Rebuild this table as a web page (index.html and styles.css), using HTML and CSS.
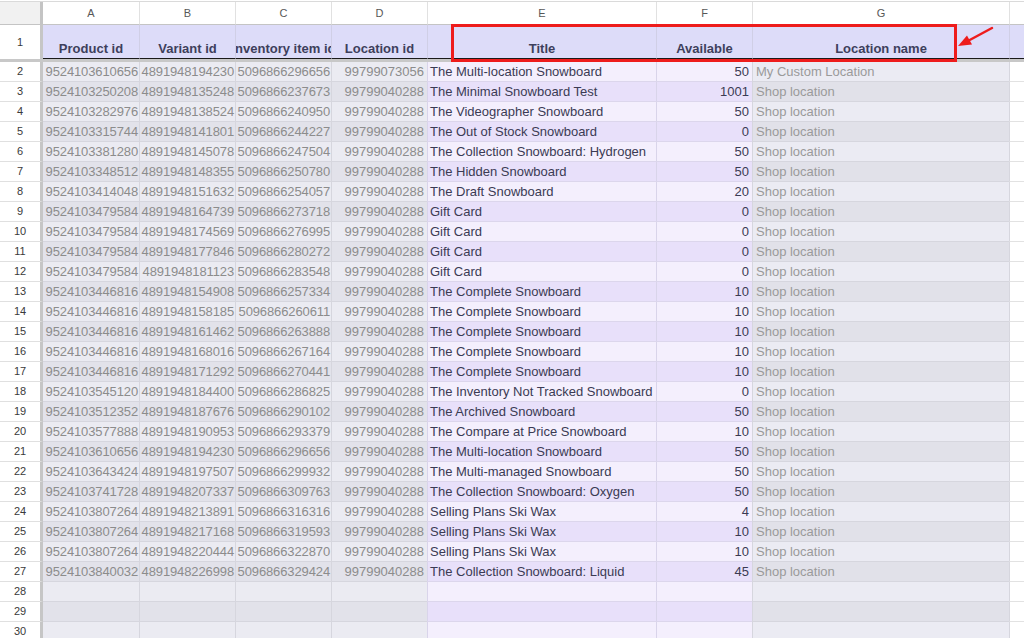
FILE: index.html
```html
<!DOCTYPE html>
<html>
<head>
<meta charset="utf-8">
<link rel="stylesheet" href="styles.css">
</head>
<body>
<div class="sheet">
  <div class="row colhead">
    <div class="corner"></div>
    <div class="ch">A</div><div class="ch">B</div><div class="ch">C</div><div class="ch">D</div><div class="ch">E</div><div class="ch">F</div><div class="ch">G</div><div class="ch"></div>
  </div>
  <div class="row r1">
    <div class="h">1</div>
    <div class="t">Product id</div>
    <div class="t">Variant id</div>
    <div class="t">Inventory item id</div>
    <div class="t">Location id</div>
    <div class="t">Title</div>
    <div class="t">Available</div>
    <div class="t">Location name</div>
    <div class="t blank"></div>
  </div>
  <div class="freeze"></div>

  <div class="row lt"><div class="h">2</div><div class="c n">9524103610656</div><div class="c n">4891948194230</div><div class="c n">5096866296656</div><div class="c n">99799073056</div><div class="c e">The Multi-location Snowboard</div><div class="c e n">50</div><div class="c g">My Custom Location</div><div class="c x"></div></div>
  <div class="row dk"><div class="h">3</div><div class="c n">9524103250208</div><div class="c n">4891948135248</div><div class="c n">5096866237673</div><div class="c n">99799040288</div><div class="c e">The Minimal Snowboard Test</div><div class="c e n">1001</div><div class="c g">Shop location</div><div class="c x"></div></div>
  <div class="row lt"><div class="h">4</div><div class="c n">9524103282976</div><div class="c n">4891948138524</div><div class="c n">5096866240950</div><div class="c n">99799040288</div><div class="c e">The Videographer Snowboard</div><div class="c e n">50</div><div class="c g">Shop location</div><div class="c x"></div></div>
  <div class="row dk"><div class="h">5</div><div class="c n">9524103315744</div><div class="c n">4891948141801</div><div class="c n">5096866244227</div><div class="c n">99799040288</div><div class="c e">The Out of Stock Snowboard</div><div class="c e n">0</div><div class="c g">Shop location</div><div class="c x"></div></div>
  <div class="row lt"><div class="h">6</div><div class="c n">9524103381280</div><div class="c n">4891948145078</div><div class="c n">5096866247504</div><div class="c n">99799040288</div><div class="c e">The Collection Snowboard: Hydrogen</div><div class="c e n">50</div><div class="c g">Shop location</div><div class="c x"></div></div>
  <div class="row dk"><div class="h">7</div><div class="c n">9524103348512</div><div class="c n">4891948148355</div><div class="c n">5096866250780</div><div class="c n">99799040288</div><div class="c e">The Hidden Snowboard</div><div class="c e n">50</div><div class="c g">Shop location</div><div class="c x"></div></div>
  <div class="row lt"><div class="h">8</div><div class="c n">9524103414048</div><div class="c n">4891948151632</div><div class="c n">5096866254057</div><div class="c n">99799040288</div><div class="c e">The Draft Snowboard</div><div class="c e n">20</div><div class="c g">Shop location</div><div class="c x"></div></div>
  <div class="row dk"><div class="h">9</div><div class="c n">9524103479584</div><div class="c n">4891948164739</div><div class="c n">5096866273718</div><div class="c n">99799040288</div><div class="c e">Gift Card</div><div class="c e n">0</div><div class="c g">Shop location</div><div class="c x"></div></div>
  <div class="row lt"><div class="h">10</div><div class="c n">9524103479584</div><div class="c n">4891948174569</div><div class="c n">5096866276995</div><div class="c n">99799040288</div><div class="c e">Gift Card</div><div class="c e n">0</div><div class="c g">Shop location</div><div class="c x"></div></div>
  <div class="row dk"><div class="h">11</div><div class="c n">9524103479584</div><div class="c n">4891948177846</div><div class="c n">5096866280272</div><div class="c n">99799040288</div><div class="c e">Gift Card</div><div class="c e n">0</div><div class="c g">Shop location</div><div class="c x"></div></div>
  <div class="row lt"><div class="h">12</div><div class="c n">9524103479584</div><div class="c n">4891948181123</div><div class="c n">5096866283548</div><div class="c n">99799040288</div><div class="c e">Gift Card</div><div class="c e n">0</div><div class="c g">Shop location</div><div class="c x"></div></div>
  <div class="row dk"><div class="h">13</div><div class="c n">9524103446816</div><div class="c n">4891948154908</div><div class="c n">5096866257334</div><div class="c n">99799040288</div><div class="c e">The Complete Snowboard</div><div class="c e n">10</div><div class="c g">Shop location</div><div class="c x"></div></div>
  <div class="row lt"><div class="h">14</div><div class="c n">9524103446816</div><div class="c n">4891948158185</div><div class="c n">5096866260611</div><div class="c n">99799040288</div><div class="c e">The Complete Snowboard</div><div class="c e n">10</div><div class="c g">Shop location</div><div class="c x"></div></div>
  <div class="row dk"><div class="h">15</div><div class="c n">9524103446816</div><div class="c n">4891948161462</div><div class="c n">5096866263888</div><div class="c n">99799040288</div><div class="c e">The Complete Snowboard</div><div class="c e n">10</div><div class="c g">Shop location</div><div class="c x"></div></div>
  <div class="row lt"><div class="h">16</div><div class="c n">9524103446816</div><div class="c n">4891948168016</div><div class="c n">5096866267164</div><div class="c n">99799040288</div><div class="c e">The Complete Snowboard</div><div class="c e n">10</div><div class="c g">Shop location</div><div class="c x"></div></div>
  <div class="row dk"><div class="h">17</div><div class="c n">9524103446816</div><div class="c n">4891948171292</div><div class="c n">5096866270441</div><div class="c n">99799040288</div><div class="c e">The Complete Snowboard</div><div class="c e n">10</div><div class="c g">Shop location</div><div class="c x"></div></div>
  <div class="row lt"><div class="h">18</div><div class="c n">9524103545120</div><div class="c n">4891948184400</div><div class="c n">5096866286825</div><div class="c n">99799040288</div><div class="c e">The Inventory Not Tracked Snowboard</div><div class="c e n">0</div><div class="c g">Shop location</div><div class="c x"></div></div>
  <div class="row dk"><div class="h">19</div><div class="c n">9524103512352</div><div class="c n">4891948187676</div><div class="c n">5096866290102</div><div class="c n">99799040288</div><div class="c e">The Archived Snowboard</div><div class="c e n">50</div><div class="c g">Shop location</div><div class="c x"></div></div>
  <div class="row lt"><div class="h">20</div><div class="c n">9524103577888</div><div class="c n">4891948190953</div><div class="c n">5096866293379</div><div class="c n">99799040288</div><div class="c e">The Compare at Price Snowboard</div><div class="c e n">10</div><div class="c g">Shop location</div><div class="c x"></div></div>
  <div class="row dk"><div class="h">21</div><div class="c n">9524103610656</div><div class="c n">4891948194230</div><div class="c n">5096866296656</div><div class="c n">99799040288</div><div class="c e">The Multi-location Snowboard</div><div class="c e n">50</div><div class="c g">Shop location</div><div class="c x"></div></div>
  <div class="row lt"><div class="h">22</div><div class="c n">9524103643424</div><div class="c n">4891948197507</div><div class="c n">5096866299932</div><div class="c n">99799040288</div><div class="c e">The Multi-managed Snowboard</div><div class="c e n">50</div><div class="c g">Shop location</div><div class="c x"></div></div>
  <div class="row dk"><div class="h">23</div><div class="c n">9524103741728</div><div class="c n">4891948207337</div><div class="c n">5096866309763</div><div class="c n">99799040288</div><div class="c e">The Collection Snowboard: Oxygen</div><div class="c e n">50</div><div class="c g">Shop location</div><div class="c x"></div></div>
  <div class="row lt"><div class="h">24</div><div class="c n">9524103807264</div><div class="c n">4891948213891</div><div class="c n">5096866316316</div><div class="c n">99799040288</div><div class="c e">Selling Plans Ski Wax</div><div class="c e n">4</div><div class="c g">Shop location</div><div class="c x"></div></div>
  <div class="row dk"><div class="h">25</div><div class="c n">9524103807264</div><div class="c n">4891948217168</div><div class="c n">5096866319593</div><div class="c n">99799040288</div><div class="c e">Selling Plans Ski Wax</div><div class="c e n">10</div><div class="c g">Shop location</div><div class="c x"></div></div>
  <div class="row lt"><div class="h">26</div><div class="c n">9524103807264</div><div class="c n">4891948220444</div><div class="c n">5096866322870</div><div class="c n">99799040288</div><div class="c e">Selling Plans Ski Wax</div><div class="c e n">10</div><div class="c g">Shop location</div><div class="c x"></div></div>
  <div class="row dk"><div class="h">27</div><div class="c n">9524103840032</div><div class="c n">4891948226998</div><div class="c n">5096866329424</div><div class="c n">99799040288</div><div class="c e">The Collection Snowboard: Liquid</div><div class="c e n">45</div><div class="c g">Shop location</div><div class="c x"></div></div>
  <div class="row lt"><div class="h">28</div><div class="c"></div><div class="c"></div><div class="c"></div><div class="c"></div><div class="c e"></div><div class="c e"></div><div class="c g"></div><div class="c x"></div></div>
  <div class="row dk"><div class="h">29</div><div class="c"></div><div class="c"></div><div class="c"></div><div class="c"></div><div class="c e"></div><div class="c e"></div><div class="c g"></div><div class="c x"></div></div>
  <div class="row lt"><div class="h">30</div><div class="c"></div><div class="c"></div><div class="c"></div><div class="c"></div><div class="c e"></div><div class="c e"></div><div class="c g"></div><div class="c x"></div></div>

  <div class="highlight"></div>
  <svg class="arrow" width="1024" height="80" viewBox="0 0 1024 80">
    <line x1="992" y1="28" x2="966" y2="42" stroke="#ee1c1c" stroke-width="2.5" stroke-linecap="round"/>
    <polygon points="958,46 967,35.5 972,44.5" fill="#ee1c1c"/>
  </svg>
</div>
</body>
</html>
```

FILE: styles.css
```css
html, body {
  margin: 0;
  padding: 0;
  background: #ffffff;
}

.sheet {
  position: relative;
  width: 1024px;
  height: 638px;
  overflow: hidden;
  font-family: "Liberation Sans", Arial, sans-serif;
  font-size: 13px;
}

.row {
  display: grid;
  grid-template-columns: 43px 96px 96px 96px 96px 229px 96px 257px 1fr;
}

/* column letters */
.colhead {
  margin-top: 1px;
  border-top: 1px solid #dadada;
  height: 23px;
}

.corner {
  background: #f1f1f1;
  border-right: 3px solid #c4c4c4;
  border-bottom: 1px solid #c4c4c4;
}

.ch {
  border-left: 1px solid #e1e1e1;
  border-bottom: 1px solid #c4c4c4;
  font-size: 11px;
  color: #575757;
  text-align: center;
  line-height: 22px;
}
.ch:nth-child(2) { border-left: none; }

/* header row 1 */
.r1 {
  height: 34px;
}

.h {
  border-right: 3px solid #c6c6c6;
  border-bottom: 1px solid #e0e0e0;
  background: #ffffff;
  text-align: center;
  font-size: 11px;
  color: #3a3a3a;
  line-height: 19px;
}

.r1 .h {
  border-bottom: none;
  line-height: 34px;
}

.t {
  background: #dddcf9;
  border-left: 1px solid #d0cfe6;
  border-bottom: 1px solid #1a1a1a;
  font-weight: bold;
  color: #3e3f5c;
  display: flex;
  align-items: flex-end;
  justify-content: center;
  padding-bottom: 2px;
  white-space: nowrap;
  overflow: hidden;
  line-height: 15px;
}
.r1 .t:nth-child(2) { border-left: none; }

.freeze {
  height: 3px;
  background: #c8c8c8;
}

/* data rows */
.lt, .dk {
  height: 20px;
}

.c {
  border-left: 1px solid #d6d6de;
  border-bottom: 1px solid #d6d6de;
  padding: 0 3px 0 2px;
  line-height: 19px;
  white-space: nowrap;
  overflow: hidden;
  color: #8c8c8c;
}
.row .c:nth-child(2) { border-left: none; }

.lt .c { background: #ebebf2; }
.dk .c { background: #e2e2ea; }

.c.n {
  text-align: right;
  padding-right: 3px;
  padding-left: 0;
  direction: rtl;
}

.row .c.n:nth-child(-n+4) {
  padding-right: 1px;
  letter-spacing: -0.12px;
}

.c.e {
  color: #3b3b54;
  border-left-color: #d9d4ea;
  border-bottom-color: #dcd6ec;
}
.lt .c.e { background: #f4effd; }
.dk .c.e { background: #e8e0fa; }

.c.e.n {
  direction: ltr;
  padding-right: 3px;
}

.c.g {
  color: #9a9a9a;
  padding-left: 3px;
}
.lt .c.g { background: #ebebf3; }
.dk .c.g { background: #e1e1e9; }

.lt .c.x, .dk .c.x {
  background: #ffffff;
  border-bottom-color: #e2e2e2;
  border-left-color: #d6d6de;
}

/* overlays */
.highlight {
  position: absolute;
  left: 451px;
  top: 24px;
  width: 506px;
  height: 38px;
  border: 3px solid #ee1c1c;
  box-sizing: border-box;
}

.arrow {
  position: absolute;
  left: 0;
  top: 0;
}
```
